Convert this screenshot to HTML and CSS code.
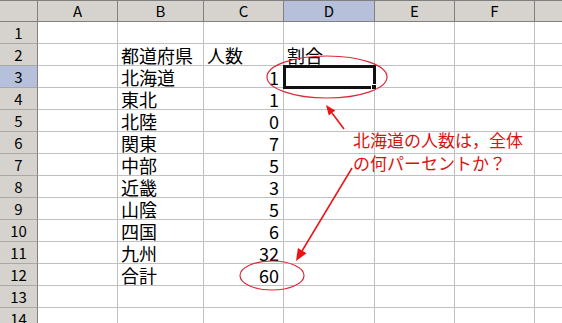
FILE: index.html
```html
<!DOCTYPE html>
<html>

<head>
    <title>
        割合
    </title>
    <link rel="stylesheet" href="styles.css">
</head>

<body>
    <div class="sheet">
        <div class="ch corner"></div><div class="ch">A</div><div class="ch">B</div><div class="ch">C</div><div class="ch sel">D</div><div class="ch">E</div><div class="ch">F</div><div class="ch"></div>

        <div class="rh">1</div><div class="c"></div><div class="c"></div><div class="c"></div><div class="c"></div><div class="c"></div><div class="c"></div><div class="c"></div>
        <div class="rh">2</div><div class="c"></div><div class="c">都道府県</div><div class="c">人数</div><div class="c">割合</div><div class="c"></div><div class="c"></div><div class="c"></div>
        <div class="rh sel">3</div><div class="c"></div><div class="c">北海道</div><div class="c num">1</div><div class="c active"></div><div class="c"></div><div class="c"></div><div class="c"></div>
        <div class="rh">4</div><div class="c"></div><div class="c">東北</div><div class="c num">1</div><div class="c"></div><div class="c"></div><div class="c"></div><div class="c"></div>
        <div class="rh">5</div><div class="c"></div><div class="c">北陸</div><div class="c num">0</div><div class="c"></div><div class="c"></div><div class="c"></div><div class="c"></div>
        <div class="rh">6</div><div class="c"></div><div class="c">関東</div><div class="c num">7</div><div class="c"></div><div class="c"></div><div class="c"></div><div class="c"></div>
        <div class="rh">7</div><div class="c"></div><div class="c">中部</div><div class="c num">5</div><div class="c"></div><div class="c"></div><div class="c"></div><div class="c"></div>
        <div class="rh">8</div><div class="c"></div><div class="c">近畿</div><div class="c num">3</div><div class="c"></div><div class="c"></div><div class="c"></div><div class="c"></div>
        <div class="rh">9</div><div class="c"></div><div class="c">山陰</div><div class="c num">5</div><div class="c"></div><div class="c"></div><div class="c"></div><div class="c"></div>
        <div class="rh">10</div><div class="c"></div><div class="c">四国</div><div class="c num">6</div><div class="c"></div><div class="c"></div><div class="c"></div><div class="c"></div>
        <div class="rh">11</div><div class="c"></div><div class="c">九州</div><div class="c num">32</div><div class="c"></div><div class="c"></div><div class="c"></div><div class="c"></div>
        <div class="rh">12</div><div class="c"></div><div class="c">合計</div><div class="c num">60</div><div class="c"></div><div class="c"></div><div class="c"></div><div class="c"></div>
        <div class="rh">13</div><div class="c"></div><div class="c"></div><div class="c"></div><div class="c"></div><div class="c"></div><div class="c"></div><div class="c"></div>
        <div class="rh">14</div><div class="c"></div><div class="c"></div><div class="c"></div><div class="c"></div><div class="c"></div><div class="c"></div><div class="c"></div>
    </div>

    <!-- red notes drawn over the sheet -->
    <svg class="marks" width="562" height="323" viewBox="0 0 562 323">
        <ellipse cx="327" cy="77" rx="60" ry="21" fill="none" stroke="#dd2a3c" stroke-width="1.2"/>
        <ellipse cx="272" cy="275.5" rx="32" ry="14.5" fill="none" stroke="#dd2a3c" stroke-width="1.2"/>
        <line x1="344" y1="129" x2="332" y2="113" stroke="#ee1111" stroke-width="1.5"/>
        <polygon points="326,105 335.2,110.6 328.8,115.4" fill="#ee1111"/>
        <line x1="352" y1="168" x2="302" y2="251" stroke="#ee1111" stroke-width="1.5"/>
        <polygon points="296,261 306.5,253.3 297.9,248.1" fill="#ee1111"/>
    </svg>
    <div class="note">北海道の人数は，全体<br>の何パーセントか？</div>
</body>

</html>
```

FILE: styles.css
```css
html, body {
    margin: 0;
    overflow: hidden;
    background: #fff;
}

body {
    position: relative;
    font-family: "Noto Sans CJK JP", sans-serif;
    color: #000;
}

.sheet {
    display: grid;
    grid-template-columns: 38px 80px 86px 80px 91px 80px 80px 60px;
    grid-auto-rows: 22px;
    width: 595px;
}

.ch {
    box-sizing: border-box;
    background-color: #d6d3ce;
    border-top: 1px solid #808080;
    border-right: 1px solid #808080;
    border-bottom: 1px solid #808080;
    font-size: 15px;
    line-height: 20px;
    text-align: center;
}

.rh {
    box-sizing: border-box;
    background-color: #d6d3ce;
    border-right: 1px solid #808080;
    border-bottom: 1px solid #a8a8a8;
    font-size: 15px;
    line-height: 20px;
    padding-top: 1px;
    text-align: center;
}

.ch.sel, .rh.sel {
    background-color: #b6c0da;
}

.c {
    position: relative;
    box-sizing: border-box;
    border-right: 1px solid #c0c0c0;
    border-bottom: 1px solid #c0c0c0;
    font-size: 18px;
    line-height: 20px;
    padding: 1px 3px 0 3px;
    white-space: nowrap;
}

.num {
    text-align: right;
    padding-right: 4px;
}

.active::before {
    content: "";
    position: absolute;
    left: -1px;
    top: -1px;
    right: -2px;
    bottom: -2px;
    border: 3px solid #111;
    z-index: 2;
}

.active::after {
    content: "";
    position: absolute;
    right: -3px;
    bottom: -3px;
    width: 4px;
    height: 4px;
    background: #111;
    border: 1px solid #fff;
    z-index: 3;
}

.marks {
    position: absolute;
    left: 0;
    top: 0;
    z-index: 5;
}

.note {
    position: absolute;
    left: 353px;
    top: 128px;
    z-index: 6;
    color: #dd1111;
    font-size: 17px;
    line-height: 23px;
    white-space: nowrap;
}
```
